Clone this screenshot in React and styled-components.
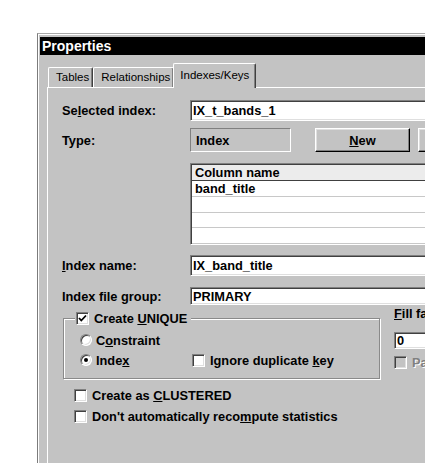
import React from 'react';
import styled, { createGlobalStyle } from 'styled-components';

const GlobalStyle = createGlobalStyle`
  html, body { margin: 0; padding: 0; background: #ffffff; overflow: hidden; }
  body { font-family: "Liberation Sans", Arial, sans-serif; }
`;

const FACE = '#c3c3c3';

const Page = styled.div`
  width: 425px;
  height: 463px;
  overflow: hidden;
  box-sizing: border-box;
  padding: 33px 0 0 37px;
`;

const Window = styled.div`
  width: 480px;
  height: 460px;
  box-sizing: border-box;
  background: ${FACE};
  border-top: 1px solid #a8a8a8;
  border-left: 1px solid #7c7c7c;
  box-shadow: inset 1px 1px 0 #ffffff;
  padding: 3px 0 0 2px;
  display: flex;
  flex-direction: column;
`;

const TitleBar = styled.div`
  height: 18px;
  background: #000;
  color: #fff;
  font-weight: bold;
  font-size: 14px;
  line-height: 18px;
  padding-left: 2px;
`;

const TabStrip = styled.div`
  display: flex;
  align-items: flex-end;
  height: 24px;
  margin: 8px 0 0 7px;
  padding-left: 1px;
`;

const Tab = styled.div`
  box-sizing: border-box;
  height: ${p => (p.$active ? 25 : 20)}px;
  margin-bottom: ${p => (p.$active ? -1 : 0)}px;
  margin-left: ${p => (p.$active ? -1 : 0)}px;
  position: relative;
  z-index: ${p => (p.$active ? 1 : 0)};
  background: ${FACE};
  border-top: 1px solid #fff;
  border-left: 1px solid #fff;
  border-right: 1px solid #404040;
  box-shadow: inset -1px 0 0 #808080;
  border-radius: 2px 2px 0 0;
  padding: ${p => (p.$active ? '0 6px 0 6px' : '0 3px 0 7px')};
  font-size: 11.5px;
  line-height: ${p => (p.$active ? 22 : 19)}px;
  color: #000;
  white-space: nowrap;
`;

const TabPanel = styled.div`
  flex: 1;
  margin-left: 7px;
  border-top: 1px solid #fff;
  border-left: 1px solid #fff;
  padding: 12px 0 0 14px;
  display: flex;
  flex-direction: column;
  font-size: 12.8px;
  font-weight: bold;
  color: #000;
`;

const FieldRow = styled.div`
  display: flex;
  align-items: center;
  height: ${p => p.$h}px;
  margin-top: ${p => p.$mt || 0}px;
`;

const Label = styled.div`
  flex: none;
  width: 128px;
  white-space: nowrap;
`;

const Key = styled.span`
  text-decoration: underline;
`;

const TextField = styled.div`
  flex: 1;
  align-self: stretch;
  box-sizing: border-box;
  background: #fff;
  border: 1px solid;
  border-color: #808080 #ffffff #ffffff #808080;
  box-shadow: inset 1px 1px 0 #404040, inset -1px -1px 0 #dfdfdf;
  padding-left: 2px;
  display: flex;
  align-items: center;
  white-space: nowrap;
`;

const ReadOnlyBox = styled.div`
  flex: none;
  width: 101px;
  align-self: stretch;
  box-sizing: border-box;
  border: 1px solid;
  border-color: #808080 #ffffff #ffffff #808080;
  padding-left: 5px;
  display: flex;
  align-items: center;
`;

const Button = styled.div`
  flex: none;
  width: 95px;
  align-self: stretch;
  box-sizing: border-box;
  margin-left: ${p => p.$ml}px;
  border: 1px solid;
  border-color: #ffffff #000000 #000000 #ffffff;
  box-shadow: inset -1px -1px 0 #808080, inset 1px 1px 0 #dfdfdf;
  display: flex;
  align-items: center;
  justify-content: center;
`;

const GridBox = styled.div`
  margin: 11px 0 0 128px;
  height: 82px;
  box-sizing: border-box;
  background: #fff;
  border: 1px solid;
  border-color: #808080 #ffffff #ffffff #808080;
  box-shadow: inset 1px 1px 0 #404040;
  padding: 1px 0 0 1px;
  display: flex;
  flex-direction: column;
`;

const GridCell = styled.div`
  height: 15px;
  line-height: 15px;
  padding-left: 3px;
  background: ${p => (p.$header ? '#ececec' : '#ffffff')};
  border-bottom: 1px solid ${p => (p.$header ? '#404040' : '#c8c8c8')};
  white-space: nowrap;
`;

const OptionsArea = styled.div`
  display: flex;
  align-items: flex-start;
  margin-top: 1px;
`;

const GroupBox = styled.fieldset`
  flex: none;
  width: 317px;
  box-sizing: border-box;
  margin: 5px 0 0 1px;
  padding: 4px 0 8px 16px;
  border: 1px solid #8a8a8a;
  box-shadow: inset 1px 1px 0 #fff, 1px 1px 0 #fff;
  min-width: 0;
`;

const Legend = styled.legend`
  margin-left: -5px;
  padding: 0 4px 0 1px;
  background: ${FACE};
  line-height: 15px;
`;

const Option = styled.div`
  display: inline-flex;
  align-items: center;
  gap: ${p => p.$gap || 5}px;
  width: ${p => (p.$w ? `${p.$w}px` : 'auto')};
  height: ${p => p.$h || 20}px;
  margin-top: ${p => p.$mt || 0}px;
  flex: none;
  white-space: nowrap;
  color: ${p => (p.$disabled ? '#808080' : '#000')};
  text-shadow: ${p => (p.$disabled ? '1px 1px 0 #fff' : 'none')};
`;

const OptionRow = styled.div`
  display: flex;
  align-items: center;
  height: 20px;
`;

const Box = styled.span`
  flex: none;
  width: 13px;
  height: 13px;
  box-sizing: border-box;
  background: ${p => (p.$disabled ? '#c3c3c3' : '#fff')};
  border: 1px solid;
  border-color: #808080 #ffffff #ffffff #808080;
  box-shadow: inset 1px 1px 0 #404040, inset -1px -1px 0 #dfdfdf;
  display: flex;
  align-items: center;
  justify-content: center;
  text-shadow: none;
`;

const Round = styled.span`
  flex: none;
  width: 12px;
  height: 12px;
  box-sizing: border-box;
  border-radius: 50%;
  background: #fff;
  border: 1px solid;
  border-color: #808080 #ffffff #ffffff #808080;
  box-shadow: inset 1px 1px 0 #404040, inset -1px -1px 0 #dfdfdf;
  display: flex;
  align-items: center;
  justify-content: center;
`;

const Dot = styled.span`
  width: 4px;
  height: 4px;
  border-radius: 50%;
  background: #000;
`;

const FillColumn = styled.div`
  flex: 1;
  margin-left: 14px;
  display: flex;
  flex-direction: column;
`;

const FillLabel = styled.div`
  line-height: 15px;
  white-space: nowrap;
`;

const SmallField = styled(TextField)`
  flex: none;
  height: 17px;
  margin-top: 11px;
`;

const CheckLine = styled.div`
  display: flex;
  align-items: center;
  height: 21px;
  margin-left: 12px;
  margin-top: ${p => p.$mt || 0}px;
`;

function CheckBox({ checked, disabled }) {
  return (
    <Box $disabled={disabled}>
      {checked && (
        <svg width="9" height="9" viewBox="0 0 9 9">
          <polyline points="1,4 3.3,6.5 8,1.5" fill="none" stroke="#000" strokeWidth="1.8" />
        </svg>
      )}
    </Box>
  );
}

function Radio({ checked }) {
  return <Round>{checked && <Dot />}</Round>;
}

export default function App() {
  return (
    <>
      <GlobalStyle />
      <Page>
        <Window>
          <TitleBar>Properties</TitleBar>
          <TabStrip>
            <Tab>Tables</Tab>
            <Tab>Relationships</Tab>
            <Tab $active>Indexes/Keys</Tab>
          </TabStrip>
          <TabPanel>
            <FieldRow $h={21}>
              <Label>Se<Key>l</Key>ected index:</Label>
              <TextField>IX_t_bands_1</TextField>
            </FieldRow>
            <FieldRow $h={24} $mt={7}>
              <Label>Type:</Label>
              <ReadOnlyBox>Index</ReadOnlyBox>
              <Button $ml={24}><span><Key>N</Key>ew</span></Button>
              <Button $ml={8} aria-label="Delete" />
            </FieldRow>
            <GridBox>
              <GridCell $header>Column name</GridCell>
              <GridCell>band_title</GridCell>
              <GridCell />
              <GridCell />
              <GridCell />
            </GridBox>
            <FieldRow $h={21} $mt={10}>
              <Label><Key>I</Key>ndex name:</Label>
              <TextField>IX_band_title</TextField>
            </FieldRow>
            <FieldRow $h={18} $mt={11}>
              <Label>Index file group:</Label>
              <TextField>PRIMARY</TextField>
            </FieldRow>
            <OptionsArea>
              <GroupBox>
                <Legend>
                  <Option $h={15}>
                    <CheckBox checked />
                    <span>Create <Key>U</Key>NIQUE</span>
                  </Option>
                </Legend>
                <OptionRow>
                  <Option $gap={4}>
                    <Radio />
                    <span>C<Key>o</Key>nstraint</span>
                  </Option>
                </OptionRow>
                <OptionRow>
                  <Option $gap={4} $w={112}>
                    <Radio checked />
                    <span>Inde<Key>x</Key></span>
                  </Option>
                  <Option>
                    <CheckBox />
                    <span>Ignore duplicate <Key>k</Key>ey</span>
                  </Option>
                </OptionRow>
              </GroupBox>
              <FillColumn>
                <FillLabel><Key>F</Key>ill factor:</FillLabel>
                <SmallField>0</SmallField>
                <Option $disabled $mt={3}>
                  <CheckBox disabled />
                  <span>Pad index</span>
                </Option>
              </FillColumn>
            </OptionsArea>
            <CheckLine $mt={6}>
              <Option>
                <CheckBox />
                <span>Create as <Key>C</Key>LUSTERED</span>
              </Option>
            </CheckLine>
            <CheckLine>
              <Option>
                <CheckBox />
                <span>Don't automatically reco<Key>m</Key>pute statistics</span>
              </Option>
            </CheckLine>
          </TabPanel>
        </Window>
      </Page>
    </>
  );
}
